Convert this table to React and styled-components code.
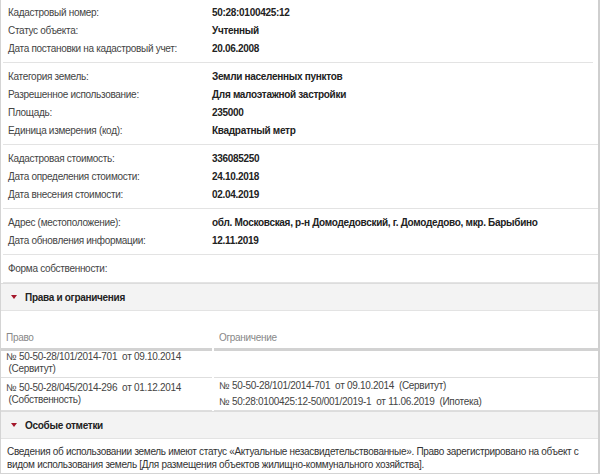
import React from "react";
import styled, { createGlobalStyle } from "styled-components";

const Global = createGlobalStyle`
  html, body { margin: 0; padding: 0; background: #fff; }
  body {
    font-family: "Liberation Sans", Arial, sans-serif;
    font-size: 10px;
    letter-spacing: -0.3px;
    color: #333;
  }
`;

const Page = styled.div`
  width: 600px;
  height: 475px;
  box-sizing: border-box;
  overflow: hidden;
  border-left: 1px solid #d4d4d4;
  border-right: 2px solid #cfcfcf;
  border-bottom: 1px solid #d4d4d4;
  margin-top: -1px;
`;

const Group = styled.div`
  padding: 5px 0 4px;
  border-bottom: 1px solid #e3e3e3;
  margin: 0 ${(p) => (p.$short ? 5 : 0)}px 0 2px;
`;

const Row = styled.div`
  display: flex;
  height: 18px;
  line-height: 18px;
`;

const Label = styled.div`
  width: 204px;
  padding-left: 5px;
  color: #444;
  flex-shrink: 0;
`;

const Value = styled.div`
  font-weight: bold;
  color: #222;
  white-space: nowrap;
`;

const SectionHeader = styled.div`
  height: 26px;
  display: flex;
  align-items: center;
  gap: 8px;
  padding-left: 10px;
  background: #f3f3f3;
  border-top: 1px solid #dcdcdc;
  border-bottom: 1px solid #e3e3e3;
  font-weight: bold;
  color: #222;
`;

const Caret = styled.span`
  width: 0;
  height: 0;
  border-left: 3.5px solid transparent;
  border-right: 3.5px solid transparent;
  border-top: 4px solid #a4162a;
`;

const Table = styled.div`
  display: grid;
  grid-template-columns: 211px 1fr;
  column-gap: 2px;
  padding-top: 16px;
`;

const HeadCell = styled.div`
  color: #888;
  padding: 4px 5px 3px;
  line-height: 14px;
  border-bottom: 3px solid #d2d2d2;
`;

const Cell = styled.div`
  height: ${(p) => p.$h}px;
  padding: 0 5px;
  line-height: 12px;
  color: #444;
  white-space: pre-wrap;
  display: flex;
  flex-direction: column;
  justify-content: ${(p) => (p.$top ? "flex-start" : "center")};
  border-bottom: 1px solid #dedede;
`;

const Line = styled.div`
  line-height: 16px;
  white-space: pre;
`;

const Note = styled.div`
  padding: 6px 6px;
  line-height: 13px;
  color: #333;
`;

const info = [
  {
    short: true,
    rows: [
      ["Кадастровый номер:", "50:28:0100425:12"],
      ["Статус объекта:", "Учтенный"],
      ["Дата постановки на кадастровый учет:", "20.06.2008"],
    ],
  },
  {
    rows: [
      ["Категория земель:", "Земли населенных пунктов"],
      ["Разрешенное использование:", "Для малоэтажной застройки"],
      ["Площадь:", "235000"],
      ["Единица измерения (код):", "Квадратный метр"],
    ],
  },
  {
    rows: [
      ["Кадастровая стоимость:", "336085250"],
      ["Дата определения стоимости:", "24.10.2018"],
      ["Дата внесения стоимости:", "02.04.2019"],
    ],
  },
  {
    rows: [
      ["Адрес (местоположение):", "обл. Московская, р-н Домодедовский, г. Домодедово, мкр. Барыбино"],
      ["Дата обновления информации:", "12.11.2019"],
    ],
  },
  { rows: [["Форма собственности:", ""]] },
];

export default function App() {
  return (
    <>
      <Global />
      <Page>
        {info.map((g, i) => (
          <Group key={i} $short={g.short}>
            {g.rows.map(([l, v]) => (
              <Row key={l}>
                <Label>{l}</Label>
                <Value>{v}</Value>
              </Row>
            ))}
          </Group>
        ))}
        <SectionHeader>
          <Caret />
          Права и ограничения
        </SectionHeader>
        <Table>
          <HeadCell>Право</HeadCell>
          <HeadCell>Ограничение</HeadCell>
          <Cell $h={26} $top>{"№ 50-50-28/101/2014-701  от 09.10.2014 \u00a0(Сервитут)"}</Cell>
          <Cell $h={26} />
          <Cell $h={32}>{"№ 50-50-28/045/2014-296  от 01.12.2014 \u00a0(Собственность)"}</Cell>
          <Cell $h={32}>
            <Line>{"№ 50-50-28/101/2014-701  от 09.10.2014  (Сервитут)"}</Line>
            <Line>{"№ 50:28:0100425:12-50/001/2019-1  от 11.06.2019  (Ипотека)"}</Line>
          </Cell>
        </Table>
        <SectionHeader>
          <Caret />
          Особые отметки
        </SectionHeader>
        <Note>
          Сведения об использовании земель имеют статус «Актуальные незасвидетельствованные». Право зарегистрировано на объект с видом использования земель [Для размещения объектов жилищно-коммунального хозяйства].
        </Note>
      </Page>
    </>
  );
}
